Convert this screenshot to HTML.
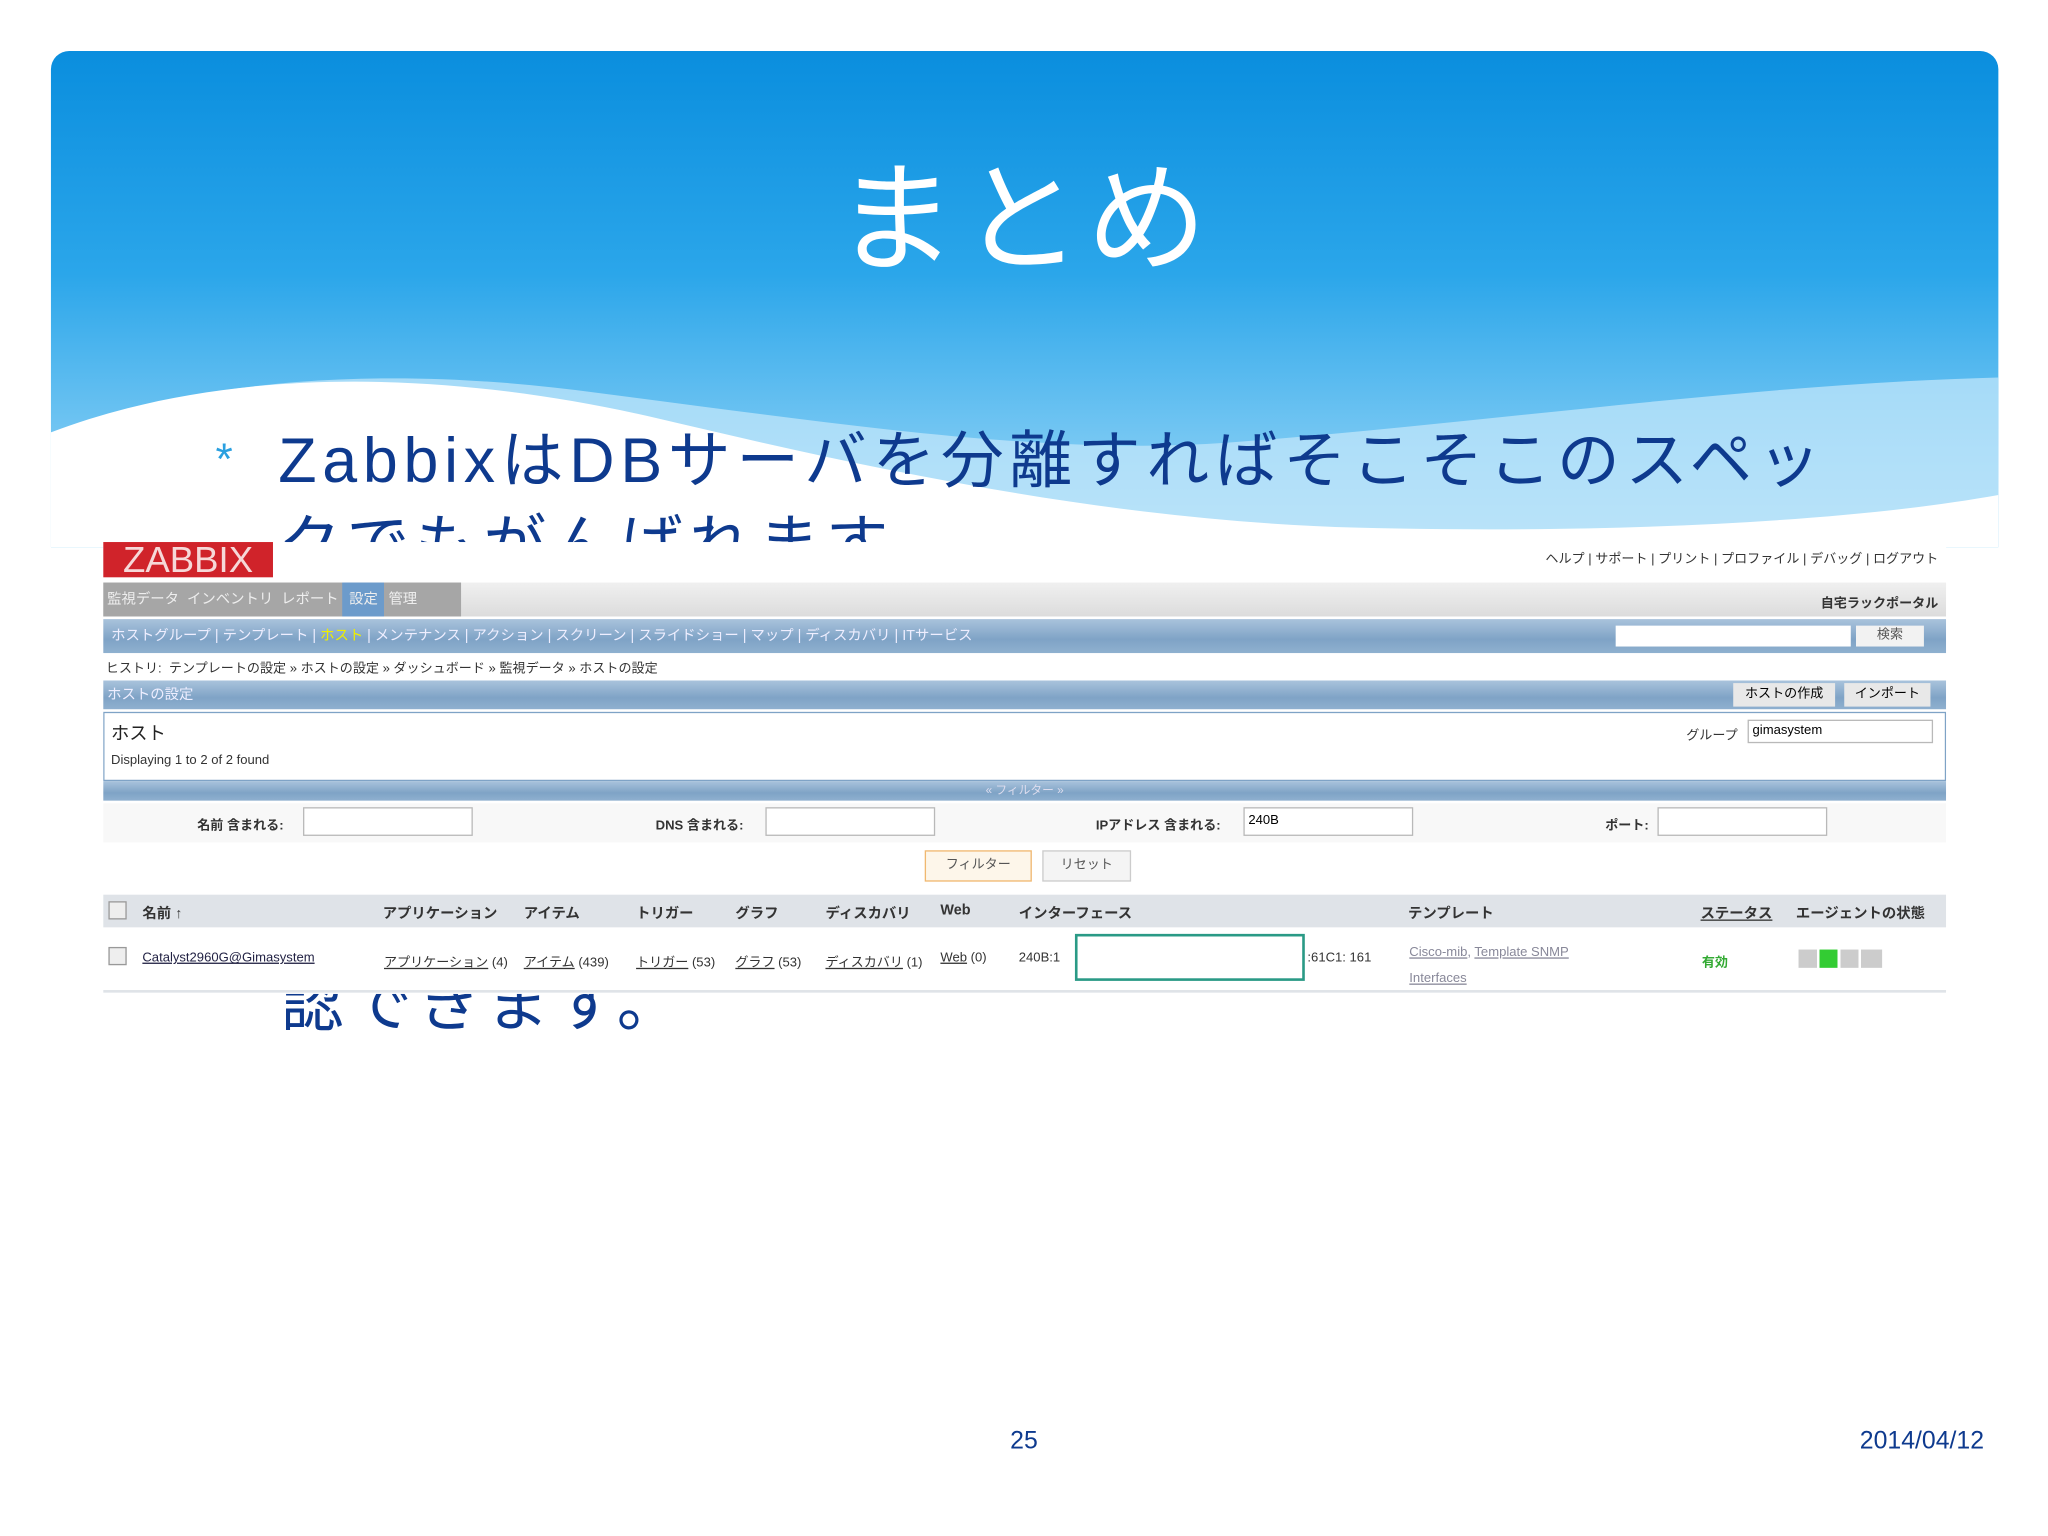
<!DOCTYPE html>
<html><head><meta charset="utf-8"><style>
html,body{margin:0;padding:0;background:#fff;width:2048px;height:1536px;overflow:hidden}
#s{position:absolute;left:0;top:0;width:1568px;height:1176px;transform:scale(1.30612);transform-origin:0 0;font-family:"Liberation Sans","Noto Sans CJK JP",sans-serif}
.a{position:absolute}
.j{font-family:"Liberation Sans","Noto Sans CJK JP",sans-serif;white-space:nowrap}
.sm{font-size:10px;color:#333}
.bar{background:linear-gradient(#a9c3dc,#7fa3c6 60%,#8fb0cf)}
.inp{position:absolute;background:#fff;border:1px solid #b9b9b9;height:20px}
</style></head><body><div id="s">
<div class="a" style="left:39px;top:39px;width:1491px;height:380px;border-radius:14px 14px 0 0;background:linear-gradient(#0a8ede,#2ba6ea 45%,#78c8f3 80%,#9fd8f7);overflow:hidden">
<svg class="a" style="left:0;top:0" width="1491" height="380" viewBox="0 0 1491 380">
<path d="M0 292 C120 250 260 240 420 262 C600 285 760 310 900 300 C1100 285 1300 255 1491 250 L1491 380 L0 380Z" fill="#c6e8fb" opacity=".7"/>
<path d="M0 292 C150 235 330 248 480 285 C650 325 820 360 1000 365 C1200 370 1380 360 1491 340 L1491 380 L0 380Z" fill="#fff"/>
</svg>
</div>
<div class="a j" style="left:0;width:1568px;top:114px;text-align:center;color:#fff;font-size:92px;line-height:110px;letter-spacing:4px">まとめ</div>
<div class="a j" style="left:165px;top:333px;color:#2aa0e0;font-size:34px">*</div>
<div class="a j" style="left:213px;top:322px;color:#0e3a8e;font-size:48px;line-height:64px;letter-spacing:4.4px">ZabbixはDBサーバを分離すればそこそこのスペッ<br>クでもがんばれます。</div>
<div class="a j" style="left:215px;top:738px;color:#0e3a8e;font-size:48px;line-height:64px;letter-spacing:4.4px">認できます。</div>
<!-- screenshot -->
<div class="a" style="left:79px;top:415px;width:1411px;height:346px;background:#fff;overflow:hidden">
<div class="a" style="left:0;top:0;width:130px;height:27px;background:#d0232a;color:#f6d8d8;font-size:28px;line-height:28px;text-align:center">ZABBIX</div>
<div class="a j sm" style="right:6px;top:4px">ヘルプ | サポート | プリント | プロファイル | デバッグ | ログアウト</div>
<div class="a" style="left:0;top:31px;width:1411px;height:26px;background:linear-gradient(#f0f0f0,#dcdcdc)"></div>
<div class="a j" style="left:0;top:31px;width:274px;height:26px;background:#a6a6a6;color:#eee;font-size:11px;line-height:26px">&nbsp;監視データ&nbsp;&nbsp;インベントリ&nbsp;&nbsp;レポート&nbsp;<span style="background:#6c9bcb;padding:7px 5px">設定</span>&nbsp;管理</div>
<div class="a j sm" style="right:6px;top:38px;font-weight:bold">自宅ラックポータル</div>
<div class="a bar j" style="left:0;top:59px;width:1411px;height:26px;color:#eef;font-size:11px;line-height:26px">&nbsp;&nbsp;ホストグループ&nbsp;|&nbsp;テンプレート&nbsp;|&nbsp;<span style="color:#ee0">ホスト</span>&nbsp;|&nbsp;メンテナンス&nbsp;|&nbsp;アクション&nbsp;|&nbsp;スクリーン&nbsp;|&nbsp;スライドショー&nbsp;|&nbsp;マップ&nbsp;|&nbsp;ディスカバリ&nbsp;|&nbsp;ITサービス</div>
<div class="a" style="left:1158px;top:64px;width:180px;height:16px;background:#fff"></div>
<div class="a j" style="left:1342px;top:64px;width:52px;height:16px;background:#f2f2f2;font-size:10px;text-align:center;line-height:16px;color:#555">検索</div>
<div class="a j sm" style="left:2px;top:88px">ヒストリ:&nbsp;&nbsp;テンプレートの設定 » ホストの設定 » ダッシュボード » 監視データ » ホストの設定</div>
<div class="a bar j" style="left:0;top:106px;width:1411px;height:22px;color:#eef;font-size:11px;line-height:22px">&nbsp;ホストの設定</div>
<div class="a j" style="left:1248px;top:108px;width:78px;height:18px;background:#e8e8e8;font-size:10px;text-align:center;line-height:18px">ホストの作成</div>
<div class="a j" style="left:1333px;top:108px;width:66px;height:18px;background:#e8e8e8;font-size:10px;text-align:center;line-height:18px">インポート</div>
<div class="a" style="left:0;top:130px;width:1409px;height:51px;border:1px solid #7fa3c6;background:#fff"></div>
<div class="a j" style="left:6px;top:136px;font-size:14px;color:#222">ホスト</div>
<div class="a j sm" style="left:6px;top:162px">Displaying 1 to 2 of 2 found</div>
<div class="a j sm" style="left:1212px;top:139px">グループ</div>
<div class="inp" style="left:1259px;top:136px;width:140px;height:16px;font-size:10px;line-height:16px">&nbsp;gimasystem</div>
<div class="a bar j" style="left:0;top:183px;width:1411px;height:15px;color:#dde;font-size:9px;text-align:center;line-height:15px">« フィルター »</div>
<div class="a" style="left:0;top:200px;width:1411px;height:30px;background:#f8f8f8"></div>
<div class="a j sm" style="left:72px;top:208px;font-weight:bold">名前 含まれる:</div><div class="inp" style="left:153px;top:203px;width:128px"></div>
<div class="a j sm" style="left:423px;top:208px;font-weight:bold">DNS 含まれる:</div><div class="inp" style="left:507px;top:203px;width:128px"></div>
<div class="a j sm" style="left:760px;top:208px;font-weight:bold">IPアドレス 含まれる:</div><div class="inp" style="left:873px;top:203px;width:128px;font-size:10px;line-height:20px">&nbsp;240B</div>
<div class="a j sm" style="left:1150px;top:208px;font-weight:bold">ポート:</div><div class="inp" style="left:1190px;top:203px;width:128px"></div>
<div class="a j" style="left:629px;top:236px;width:80px;height:22px;border:1px solid #f0b870;background:#fdf6ea;font-size:10px;text-align:center;line-height:22px;color:#555">フィルター</div>
<div class="a j" style="left:719px;top:236px;width:66px;height:22px;border:1px solid #ccc;background:#f4f4f4;font-size:10px;text-align:center;line-height:22px;color:#555">リセット</div>
<div class="a" style="left:0;top:270px;width:1411px;height:25px;background:#dfe3e8"></div>
<div class="a j sm" style="left:0;top:276px;width:1411px;font-weight:bold;font-size:11px"><span class="a" style="left:30px">名前 ↑</span><span class="a" style="left:214px">アプリケーション</span><span class="a" style="left:322px">アイテム</span><span class="a" style="left:408px">トリガー</span><span class="a" style="left:484px">グラフ</span><span class="a" style="left:553px">ディスカバリ</span><span class="a" style="left:641px">Web</span><span class="a" style="left:701px">インターフェース</span><span class="a" style="left:999px">テンプレート</span><span class="a" style="left:1223px;text-decoration:underline">ステータス</span><span class="a" style="left:1296px">エージェントの状態</span></div>
<div class="a j" style="left:0;top:313px;width:1411px;font-size:10px;color:#333"><span class="a" style="left:30px;color:#224;text-decoration:underline">Catalyst2960G@Gimasystem</span><span class="a" style="left:215px"><u>アプリケーション</u> (4)</span><span class="a" style="left:322px"><u>アイテム</u> (439)</span><span class="a" style="left:408px"><u>トリガー</u> (53)</span><span class="a" style="left:484px"><u>グラフ</u> (53)</span><span class="a" style="left:553px"><u>ディスカバリ</u> (1)</span><span class="a" style="left:641px"><u>Web</u> (0)</span><span class="a" style="left:701px">240B:1</span><span class="a" style="left:922px">:61C1: 161</span><span class="a" style="left:1000px;top:-8px;color:#889;line-height:20px"><u>Cisco-mib</u>, <u>Template SNMP</u><br><u>Interfaces</u></span><span class="a" style="left:1224px;color:#3a3;font-weight:bold">有効</span></div>
<div class="a" style="left:744px;top:300px;width:172px;height:32px;border:2px solid #2a9a86;background:#fff"></div>
<div class="a" style="left:1298px;top:312px;width:64px;height:14px;background:linear-gradient(90deg,#ccc 0 14px,#fff 14px 16px,#3c3 16px 30px,#fff 30px 32px,#ccc 32px 46px,#fff 46px 48px,#ccc 48px)"></div>
<div class="a" style="left:4px;top:275px;width:12px;height:12px;border:1px solid #999;background:#eee"></div>
<div class="a" style="left:4px;top:310px;width:12px;height:12px;border:1px solid #999;background:#eee"></div>
<div class="a" style="left:0;top:343px;width:1411px;height:2px;background:#dfe3e8"></div>
</div>
<div class="a j" style="left:0;width:1568px;top:1093px;text-align:center;color:#0e3a8e;font-size:19px">25</div>
<div class="a j" style="right:49px;top:1093px;color:#0e3a8e;font-size:19px">2014/04/12</div>
</div></body></html>
